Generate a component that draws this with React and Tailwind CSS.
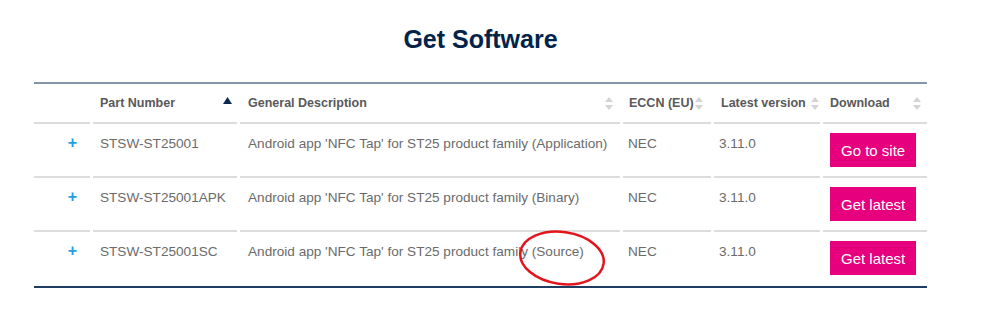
import React from "react";

const rows = [
  { part: "STSW-ST25001", desc: "Android app 'NFC Tap' for ST25 product family (Application)", eccn: "NEC", version: "3.11.0", action: "Go to site" },
  { part: "STSW-ST25001APK", desc: "Android app 'NFC Tap' for ST25 product family (Binary)", eccn: "NEC", version: "3.11.0", action: "Get latest" },
  { part: "STSW-ST25001SC", desc: "Android app 'NFC Tap' for ST25 product family (Source)", eccn: "NEC", version: "3.11.0", action: "Get latest" },
];

function SortBoth() {
  return (
    <svg width="8" height="13" viewBox="0 0 8 13" className="shrink-0">
      <path d="M4 0 L8 5 L0 5 Z" fill="#d4d4d4" />
      <path d="M4 13 L8 8 L0 8 Z" fill="#d4d4d4" />
    </svg>
  );
}

function SortUp() {
  return (
    <svg width="9" height="7" viewBox="0 0 9 7" className="shrink-0">
      <path d="M4.5 0 L9 7 L0 7 Z" fill="#0b2a52" />
    </svg>
  );
}

const grid = "grid grid-cols-[56px_144px_380px_88px_106px_104px] gap-x-[3px]";

export default function App() {
  return (
    <div className="w-[998px] h-[317px] bg-white font-['Liberation_Sans',Arial,sans-serif]">
      <div className="ml-[34px] w-[893px]">
        <h1 className="pt-[24px] h-[82px] text-center text-[25px] font-bold text-[#03234b] leading-[30px]">
          Get Software
        </h1>

        <div className="relative border-t-2 border-t-[#8395ab] border-b-2 border-b-[#1f3d63]">
          {/* Header */}
          <div className={`${grid} h-[40px] text-[12.5px] font-bold text-[#595959] whitespace-nowrap`}>
            <div className="border-b-2 border-[#dcdcdc]" />
            <div className="border-b-2 border-[#dcdcdc] flex items-center justify-between pl-[7px] pr-[5px]">
              <span>Part Number</span>
              <span className="-mt-[6px]"><SortUp /></span>
            </div>
            <div className="border-b-2 border-[#dcdcdc] flex items-center justify-between pl-[8px] pr-[7px]">
              <span>General Description</span>
              <SortBoth />
            </div>
            <div className="border-b-2 border-[#dcdcdc] flex items-center justify-between pl-[6px] pr-[8px]">
              <span>ECCN (EU)</span>
              <SortBoth />
            </div>
            <div className="border-b-2 border-[#dcdcdc] flex items-center justify-between pl-[7px] pr-[1px]">
              <span>Latest version</span>
              <SortBoth />
            </div>
            <div className="border-b-2 border-[#dcdcdc] flex items-center justify-between pl-[7px] pr-[6px]">
              <span>Download</span>
              <SortBoth />
            </div>
          </div>

          {/* Rows */}
          {rows.map((r, i) => {
            const line = i < rows.length - 1 ? "border-b-2 border-[#dcdcdc]" : "";
            return (
              <div key={r.part} className={`${grid} h-[54px] text-[13.6px] text-[#6b6b6b] leading-[20px] whitespace-nowrap`}>
                <div className={`${line} pt-[9px] text-right pr-[13px] text-[#1ea0e6] text-[16px] font-bold`}>+</div>
                <div className={`${line} pt-[10px] pl-[7px]`}>{r.part}</div>
                <div className={`${line} pt-[10px] pl-[8px]`}>{r.desc}</div>
                <div className={`${line} pt-[10px] pl-[5px]`}>{r.eccn}</div>
                <div className={`${line} pt-[10px] pl-[5px]`}>{r.version}</div>
                <div className={`${line} pt-[9px] pl-[7px]`}>
                  <button className="h-[34px] px-[11px] bg-[#e6007e] text-white text-[15px] leading-none">
                    {r.action}
                  </button>
                </div>
              </div>
            );
          })}

          {/* Red annotation ellipse */}
          <svg
            className="absolute left-[480px] top-[143px] pointer-events-none"
            width="96"
            height="62"
            viewBox="0 0 96 62"
          >
            <ellipse
              cx="48"
              cy="31"
              rx="42"
              ry="26"
              transform="rotate(8 48 31)"
              fill="none"
              stroke="#e3141b"
              strokeWidth="2.5"
            />
          </svg>
        </div>
      </div>
    </div>
  );
}
